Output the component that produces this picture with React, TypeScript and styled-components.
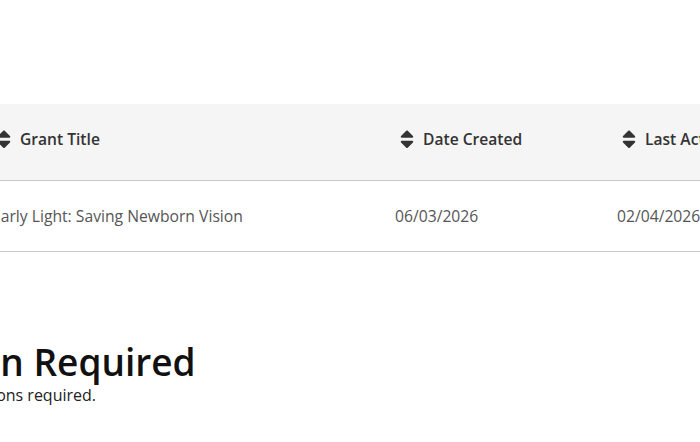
import React from "react";
import styled, { createGlobalStyle } from "styled-components";
import { FaSort } from "react-icons/fa";

const GlobalStyle = createGlobalStyle`
  html, body { margin: 0; padding: 0; background: #ffffff; }
  body { font-family: "Open Sans", "Liberation Sans", sans-serif; overflow: hidden; }
`;

const Page = styled.div`
  margin-left: -90px;
  padding-top: 104px;
  width: 1100px;
`;

const TableWrap = styled.div`
  margin-left: 66px;
`;

const Table = styled.table`
  border-collapse: collapse;
  table-layout: fixed;
  width: 900px;
`;

const HeadCell = styled.th<{ $w: number }>`
  width: ${(p) => p.$w}px;
  height: 76px;
  box-sizing: border-box;
  background: #f5f5f5;
  border-bottom: 1px solid #c8c8c8;
  padding: 0 0 0 21px;
  text-align: left;
  font-size: 15.6px;
  font-weight: 600;
  color: #333333;
`;

const HeadInner = styled.span`
  display: inline-flex;
  align-items: center;
  gap: 9px;
`;

const SortIcon = styled(FaSort)`
  width: 14px;
  height: 22.5px;
  color: #333333;
  flex: none;
`;

const Cell = styled.td`
  height: 71px;
  box-sizing: border-box;
  border-bottom: 1px solid #c8c8c8;
  padding: 0 0 0 16px;
  font-size: 15.7px;
  color: #555555;
`;

const Section = styled.section`
  margin-top: 88px;
`;

const Heading = styled.h2`
  margin: 0;
  font-size: 37px;
  font-weight: 600;
  color: #111111;
  line-height: 1.2;
`;

const SubText = styled.p`
  margin: 0;
  padding-left: 34px;
  font-size: 16px;
  color: #222222;
`;

const columns = [
  { label: "Grant Title", w: 403 },
  { label: "Date Created", w: 222 },
  { label: "Last Activity", w: 275 },
];

export default function App() {
  return (
    <>
      <GlobalStyle />
      <Page>
        <TableWrap>
          <Table>
            <thead>
              <tr>
                {columns.map((c) => (
                  <HeadCell key={c.label} $w={c.w}>
                    <HeadInner>
                      <SortIcon />
                      {c.label}
                    </HeadInner>
                  </HeadCell>
                ))}
              </tr>
            </thead>
            <tbody>
              <tr>
                <Cell>Early Light: Saving Newborn Vision</Cell>
                <Cell>06/03/2026</Cell>
                <Cell>02/04/2026</Cell>
              </tr>
            </tbody>
          </Table>
        </TableWrap>
        <Section>
          <Heading>Action Required</Heading>
          <SubText>No actions required.</SubText>
        </Section>
      </Page>
    </>
  );
}
